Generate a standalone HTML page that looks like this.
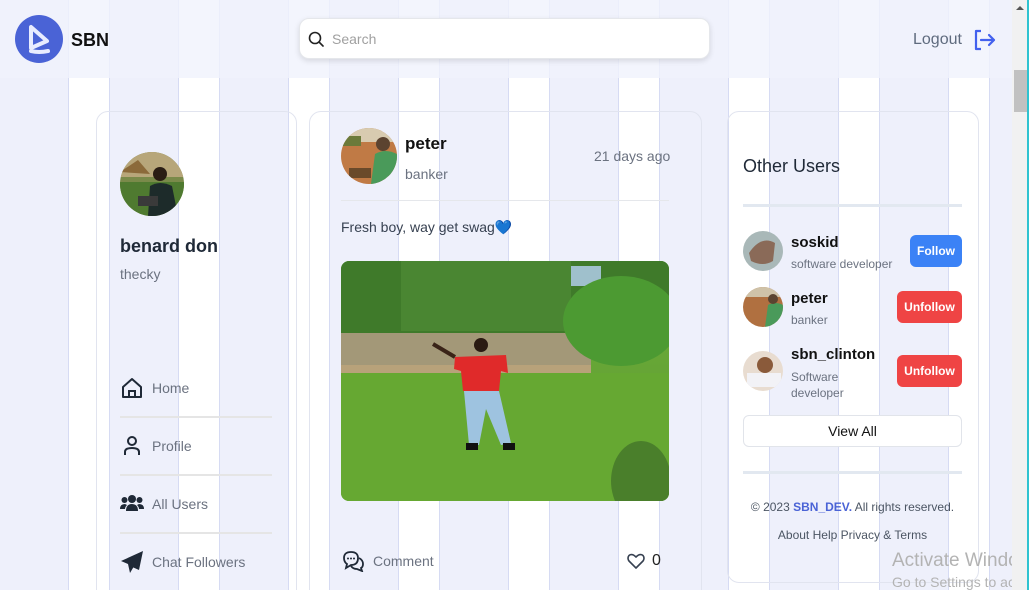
<!DOCTYPE html>
<html><head><meta charset="utf-8">
<style>
*{box-sizing:border-box;margin:0;padding:0}
html,body{width:1029px;height:590px;overflow:hidden}
body{position:relative;font-family:"Liberation Sans",sans-serif;background:#eef0fb}
.bg{position:absolute;left:0;top:0;width:1012px;height:590px;
background-image:repeating-linear-gradient(90deg,#eef0fb 0px,#eef0fb 68px,#d6dbf3 68px,#d6dbf3 69px,#ffffff 69px,#ffffff 109px,#d6dbf3 109px,#d6dbf3 110px);}
.abs{position:absolute}
.header{left:0;top:0;width:1012px;height:78px;background:rgba(240,242,252,.8);}
.card{position:absolute;border:1px solid #e1e4ef;border-radius:12px;}
.gray{color:#6b7280}
.sep{position:absolute;height:2px;background:#e5e5e5}
.btn{position:absolute;color:#fff;font-weight:bold;font-size:12px;border-radius:6px;text-align:center;line-height:32px}
</style></head><body>
<div class="bg"></div>
<div class="abs header"></div>
<div class="abs" style="left:15px;top:15px;width:48px;height:48px;border-radius:50%;background:#4a63d6"></div>
<svg class="abs" style="left:15px;top:15px" width="48" height="48"><path d="M16 12 L16 33 L32 26 Z" fill="none" stroke="#e8ecff" stroke-width="4" stroke-linejoin="round"/><path d="M16 36 Q24 38 33 36" fill="none" stroke="#e8ecff" stroke-width="4" stroke-linecap="round"/></svg>
<div class="abs" style="left:71px;top:30px;font-size:18px;font-weight:bold;color:#111">SBN</div>
<div class="abs" style="left:299px;top:18px;width:411px;height:41px;background:#fff;border-radius:10px;border:1px solid #e5e7eb;box-shadow:0 2px 6px rgba(0,0,0,.12)"></div>
<svg class="abs" style="left:308px;top:31px" width="16" height="16"><circle cx="7" cy="7" r="5.5" fill="none" stroke="#222" stroke-width="1.6"/><path d="M11 11l4 4" stroke="#222" stroke-width="1.6" stroke-linecap="round"/></svg>
<div class="abs" style="left:332px;top:31px;font-size:14px;color:#a0a0a0">Search</div>
<div class="abs" style="left:913px;top:31px;font-size:16px;color:#5f6b7e">Logout</div>
<svg class="abs" style="left:972px;top:28px" width="24" height="24"><path d="M9 3H4v18h5" fill="none" stroke="#4361ee" stroke-width="2.2" stroke-linejoin="round"/><path d="M9 12h13M17 7l5 5-5 5" fill="none" stroke="#4361ee" stroke-width="2.2" stroke-linecap="round" stroke-linejoin="round"/></svg>

<!-- left card -->
<div class="card" style="left:96px;top:111px;width:201px;height:500px"></div>
<svg class="abs" style="left:120px;top:152px" width="64" height="64"><defs><clipPath id="c1"><circle cx="32" cy="32" r="32"/></clipPath></defs><g clip-path="url(#c1)"><rect width="64" height="64" fill="#7a8a4a"/><rect y="0" width="64" height="25" fill="#b7a67a"/><path d="M0 20 L18 8 L30 22Z" fill="#8b6a3a"/><rect x="0" y="30" width="64" height="34" fill="#4f7a30"/><circle cx="40" cy="22" r="7" fill="#2a1d14"/><path d="M28 64 L30 34 Q40 28 52 34 L58 64Z" fill="#1d2b2a"/><rect x="18" y="44" width="20" height="10" fill="#3a3a3a"/></g></svg>
<div class="abs" style="left:120px;top:236px;font-size:18px;font-weight:bold;color:#1f2937">benard don</div>
<div class="abs gray" style="left:120px;top:266px;font-size:14px">thecky</div>
<svg class="abs" style="left:121px;top:377px" width="22" height="22"><path d="M2 10 L11 2 L20 10 V20 H2Z" fill="none" stroke="#1f2937" stroke-width="2" stroke-linejoin="round"/><path d="M8 20 V14 H14 V20" fill="none" stroke="#1f2937" stroke-width="2"/></svg>
<div class="abs gray" style="left:152px;top:380px;font-size:14px">Home</div>
<div class="sep" style="left:120px;top:416px;width:152px"></div>
<svg class="abs" style="left:122px;top:435px" width="20" height="22"><circle cx="10" cy="6" r="4" fill="none" stroke="#1f2937" stroke-width="2"/><path d="M3 20 V17 Q3 13 10 13 Q17 13 17 17 V20" fill="none" stroke="#1f2937" stroke-width="2"/></svg>
<div class="abs gray" style="left:152px;top:438px;font-size:14px">Profile</div>
<div class="sep" style="left:120px;top:474px;width:152px"></div>
<svg class="abs" style="left:120px;top:494px" width="24" height="18"><circle cx="12" cy="5" r="4" fill="#1f2937"/><circle cx="4.5" cy="6" r="3" fill="#1f2937"/><circle cx="19.5" cy="6" r="3" fill="#1f2937"/><path d="M6 17 Q6 10 12 10 Q18 10 18 17Z" fill="#1f2937"/><path d="M0 15 Q0 10 5 10 L7 11 Q5 13 5 15Z M24 15 Q24 10 19 10 L17 11 Q19 13 19 15Z" fill="#1f2937"/></svg>
<div class="abs gray" style="left:152px;top:496px;font-size:14px">All Users</div>
<div class="sep" style="left:120px;top:532px;width:152px"></div>
<svg class="abs" style="left:120px;top:550px" width="24" height="24"><path d="M23 1 L1 11 L8 14 Z M23 1 L8 14 L10 23 Z M23 1 L10 16 L19 20 Z" fill="#1f2937"/></svg>
<div class="abs gray" style="left:152px;top:554px;font-size:14px">Chat Followers</div>

<!-- middle card -->
<div class="card" style="left:309px;top:111px;width:393px;height:500px"></div>
<svg class="abs" style="left:341px;top:128px" width="56" height="56"><defs><clipPath id="c2"><circle cx="28" cy="28" r="28"/></clipPath></defs><g clip-path="url(#c2)"><rect width="56" height="56" fill="#c07a45"/><rect width="56" height="14" fill="#d8cbb0"/><rect x="0" y="8" width="20" height="10" fill="#6b7a3a"/><path d="M30 56 L34 26 Q44 20 56 26 V56Z" fill="#4a9a5a"/><circle cx="42" cy="16" r="7" fill="#5b4330"/><rect x="8" y="40" width="22" height="10" fill="#6a4a2a"/></g></svg>
<div class="abs" style="left:405px;top:134px;font-size:17px;font-weight:bold;color:#111">peter</div>
<div class="abs gray" style="left:405px;top:166px;font-size:14px">banker</div>
<div class="abs gray" style="left:594px;top:148px;font-size:14px">21 days ago</div>
<div class="abs" style="left:341px;top:200px;width:328px;height:1px;background:#e5e7eb"></div>
<div class="abs" style="left:341px;top:219px;font-size:14px;color:#374151">Fresh boy, way get swag<span style="color:#1e6fd9">&#x1F499;</span></div>
<svg class="abs" style="left:341px;top:261px" width="328" height="240"><defs><clipPath id="c3"><rect width="328" height="240" rx="8"/></clipPath><linearGradient id="g" x1="0" y1="0" x2="0" y2="1"><stop offset="0" stop-color="#6fae3e"/><stop offset="1" stop-color="#5b9a2c"/></linearGradient></defs><g clip-path="url(#c3)"><rect width="328" height="240" fill="url(#g)"/><rect width="328" height="75" fill="#3f7a2a"/><rect x="60" y="0" width="170" height="70" fill="#4a8632"/><rect x="230" y="5" width="30" height="20" fill="#9fc0cc"/><rect x="0" y="72" width="250" height="40" fill="#a39878"/><rect x="0" y="104" width="250" height="8" fill="#b8a27a"/><ellipse cx="280" cy="60" rx="58" ry="45" fill="#4c9a32"/><rect x="0" y="112" width="328" height="128" fill="#66a832"/><ellipse cx="300" cy="220" rx="30" ry="40" fill="#3f6e28" opacity=".7"/><circle cx="140" cy="84" r="7" fill="#2a1a12"/><path d="M114 96 L165 94 L167 112 L160 110 L158 130 L122 130 L120 110 L113 108Z" fill="#e02a2a"/><path d="M114 96 L92 83" stroke="#3a2418" stroke-width="4"/><path d="M123 130 L158 130 L170 182 L160 184 L145 148 L138 184 L128 184Z" fill="#9ec3e0"/><rect x="125" y="182" width="12" height="7" fill="#111"/><rect x="162" y="182" width="12" height="7" fill="#111"/></g></svg>
<svg class="abs" style="left:342px;top:550px" width="23" height="22"><path d="M9 2 Q2 2 2 8 Q2 12 5 14 L4 18 L9 15 Q16 15 16 8 Q16 2 9 2Z" fill="none" stroke="#1f2937" stroke-width="1.8"/><path d="M17 8 Q21 10 21 14 Q21 17 19 18 L20 21 L15 19 Q11 19 9 16" fill="none" stroke="#1f2937" stroke-width="1.8"/><circle cx="6" cy="8.5" r="1" fill="#1f2937"/><circle cx="9" cy="8.5" r="1" fill="#1f2937"/><circle cx="12" cy="8.5" r="1" fill="#1f2937"/></svg>
<div class="abs gray" style="left:373px;top:553px;font-size:14px">Comment</div>
<svg class="abs" style="left:627px;top:553px" width="18" height="16"><path d="M9 15 L2 8 Q0 5 2 2.5 Q5 0 9 4 Q13 0 16 2.5 Q18 5 16 8Z" fill="none" stroke="#374151" stroke-width="1.6" stroke-linejoin="round"/></svg>
<div class="abs" style="left:652px;top:552px;font-size:16px;color:#222">0</div>

<!-- right card -->
<div class="card" style="left:727px;top:111px;width:252px;height:472px"></div>
<div class="abs" style="left:743px;top:156px;font-size:18px;color:#1f2937">Other Users</div>
<div class="abs" style="left:743px;top:204px;width:219px;height:3px;background:#e2e8f0"></div>
<svg class="abs" style="left:743px;top:231px" width="40" height="40"><circle cx="20" cy="20" r="20" fill="#a9b8b8"/><path d="M6 22 Q18 4 32 12 L30 30 Q20 36 8 30Z" fill="#8a6a58"/></svg>
<div class="abs" style="left:791px;top:234px;font-size:15px;font-weight:bold;color:#111">soskid</div>
<div class="abs gray" style="left:791px;top:257px;font-size:12px">software developer</div>
<div class="btn" style="left:910px;top:235px;width:52px;background:#3b82f6">Follow</div>
<svg class="abs" style="left:743px;top:287px" width="40" height="40"><defs><clipPath id="c4"><circle cx="20" cy="20" r="20"/></clipPath></defs><g clip-path="url(#c4)"><rect width="40" height="40" fill="#b07040"/><rect width="40" height="10" fill="#cfc2a8"/><path d="M22 40 L25 18 Q32 14 40 18 V40Z" fill="#4a9a5a"/><circle cx="30" cy="12" r="5" fill="#5b4330"/></g></svg>
<div class="abs" style="left:791px;top:290px;font-size:15px;font-weight:bold;color:#111">peter</div>
<div class="abs gray" style="left:791px;top:313px;font-size:12px">banker</div>
<div class="btn" style="left:897px;top:291px;width:65px;background:#ef4444">Unfollow</div>
<svg class="abs" style="left:743px;top:351px" width="40" height="40"><defs><clipPath id="c5"><circle cx="20" cy="20" r="20"/></clipPath></defs><g clip-path="url(#c5)"><rect width="40" height="40" fill="#e8dcd0"/><circle cx="22" cy="14" r="8" fill="#8a5a3a"/><rect x="4" y="22" width="34" height="14" fill="#f2f2f6"/></g></svg>
<div class="abs" style="left:791px;top:346px;font-size:15px;font-weight:bold;color:#111">sbn_clinton</div>
<div class="abs gray" style="left:791px;top:369px;font-size:12px;line-height:16px">Software<br>developer</div>
<div class="btn" style="left:897px;top:355px;width:65px;background:#ef4444">Unfollow</div>
<div class="abs" style="left:743px;top:415px;width:219px;height:32px;border:1px solid #e1e4ea;border-radius:6px;background:#fff;text-align:center;line-height:30px;font-size:14px;color:#111">View All</div>
<div class="abs" style="left:743px;top:471px;width:219px;height:3px;background:#e2e8f0"></div>
<div class="abs" style="left:743px;top:500px;width:219px;text-align:center;font-size:12px;color:#4b5563">© 2023 <b style="color:#4a63d6">SBN_DEV.</b> All rights reserved.</div>
<div class="abs" style="left:743px;top:528px;width:219px;text-align:center;font-size:12px;color:#4b5563">About Help Privacy &amp; Terms</div>
<div class="abs" style="left:892px;top:550px;font-size:19px;color:#b3b3b3;white-space:nowrap">Activate Windows</div>
<div class="abs" style="left:892px;top:574px;font-size:14px;color:#b3b3b3;white-space:nowrap">Go to Settings to activate</div>
<div class="abs" style="left:1012px;top:0;width:17px;height:590px;background:#f1f1f1"></div>
<div class="abs" style="left:1014px;top:70px;width:13px;height:42px;background:#c1c1c1"></div>
<div class="abs" style="left:1016px;top:6px;width:0;height:0;border:4px solid transparent;border-bottom-color:#555;border-top:0"></div>
<div class="abs" style="left:1027px;top:0;width:2px;height:590px;background:#2fc3d0"></div>
</body></html>
